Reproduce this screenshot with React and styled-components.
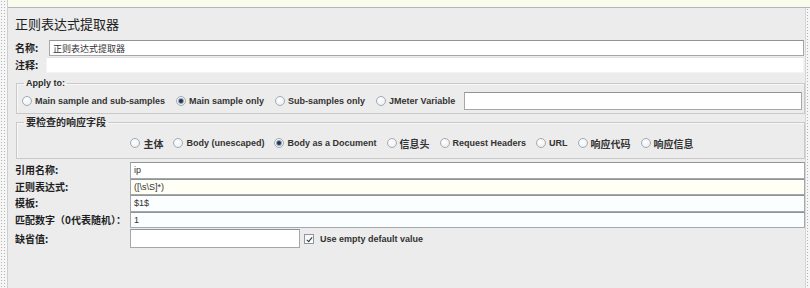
import React from "react";
import styled, { createGlobalStyle } from "styled-components";

const GlobalStyle = createGlobalStyle`
  html, body {
    margin     : 0       ;
    padding    : 0       ;
    background : #ececec ;
  }
  * { box-sizing : border-box ; }
`;

const CJK   = `"Noto Sans CJK SC", "Liberation Sans", sans-serif`;
const LATIN = `"Liberation Sans", "Noto Sans CJK SC", sans-serif`;

const Screen = styled.div`
  display    : flex    ;
  width      : 810px   ;
  height     : 288px   ;
  overflow   : hidden  ;
  background : #ececec ;
`;

const Splitter = styled.div`
  flex             : 0 0 ${(p) => p.$w}px ;
  background-color : #f6f6f6 ;
  background-image : radial-gradient(circle, #b3b3b3 0.7px, transparent 0.9px) ;
  background-size  : 3px 3px ;
  border-right     : ${(p) => (p.$left ? "1px solid #cfcfcf" : "none")} ;
  border-left      : ${(p) => (p.$left ? "none" : "1px solid #d6d6d6")} ;
`;

const Column = styled.div`
  flex           : 1      ;
  display        : flex   ;
  flex-direction : column ;
`;

const TopBand = styled.div`
  height        : 8px               ;
  background    : #fbfbeb           ;
  border-bottom : 1px solid #aeb6be ;
`;

const Main = styled.div`
  flex    : 1    ;
  display : flex ;
`;

const Panel = styled.div`
  flex           : 1      ;
  display        : flex   ;
  flex-direction : column ;
  padding        : 0 0 0 7px ;
  color          : #1e1e1e ;
`;

const Title = styled.div`
  margin-top  : 8px   ;
  height      : 16px  ;
  line-height : 16px  ;
  font-family : ${CJK} ;
  font-size   : 13px  ;
  color       : #202020 ;
`;

const FieldRow = styled.div`
  display      : flex   ;
  align-items  : center ;
  height       : 16px   ;
  margin-top   : ${(p) => p.$top}px ;
  margin-right : 1px    ;
`;

const FieldLabel = styled.div`
  flex        : 0 0 ${(p) => p.$w}px ;
  font-family : ${CJK} ;
  font-size   : 10px   ;
  font-weight : 700    ;
  line-height : 14px   ;
  white-space : nowrap ;
`;

const TextBox = styled.div`
  flex        : ${(p) => (p.$w ? `0 0 ${p.$w}px` : "1")} ;
  height      : 100% ;
  display     : flex   ;
  align-items : center ;
  padding     : 0 3px  ;
  background  : ${(p) => p.$bg || "#ffffff"} ;
  border      : 1px solid ${(p) => (p.$flat ? "#f4f4f4" : "#a4a8ac")} ;
  border-top-color : ${(p) => (p.$flat ? "#e2e2e2" : "#8f9499")} ;
  font-family : ${(p) => (p.$cjk ? CJK : LATIN)} ;
  font-size   : 9px    ;
  color       : #333   ;
  white-space : nowrap ;
`;

const Group = styled.fieldset`
  margin     : ${(p) => p.$top}px 0 0 1px ;
  padding    : ${(p) => p.$pad}px 2px ${(p) => p.$pad}px 5px ;
  border     : 1px solid #c9c9c9 ;
  box-shadow : inset 1px 1px 0 #f8f8f8 ;
  min-width  : 0 ;
`;

const Legend = styled.legend`
  margin-left : 2px  ;
  padding     : 0 2px ;
  line-height : 12px ;
  font-family : ${(p) => (p.$cjk ? CJK : LATIN)} ;
  font-size   : ${(p) => (p.$cjk ? 10 : 9)}px ;
  font-weight : 700  ;
  color       : #2a2a2a ;
`;

const RadioRow = styled.div`
  display         : flex   ;
  align-items     : center ;
  height          : ${(p) => p.$h}px ;
  justify-content : ${(p) => (p.$center ? "center" : "flex-start")} ;
`;

const RadioItem = styled.label`
  display      : flex   ;
  align-items  : center ;
  gap          : 3px    ;
  margin-right : ${(p) => p.$space || 11}px ;
  font-family  : ${(p) => (p.$cjk ? CJK : LATIN)} ;
  font-size    : ${(p) => (p.$cjk ? 10 : 9)}px ;
  font-weight  : 700    ;
  color        : #333   ;
  white-space  : nowrap ;

  &:last-child { margin-right : 0 ; }
`;

const RadioDot = styled.span`
  position      : relative ;
  flex          : 0 0 10px ;
  height        : 10px     ;
  border-radius : 50%      ;
  border        : 1px solid #a2abb4 ;
  background    : radial-gradient(circle at 40% 35%, #ffffff 0%, #e6eaee 100%) ;

  &::after {
    content       : "" ;
    position      : absolute ;
    left          : 2px ;
    top           : 2px ;
    width         : 4px ;
    height        : 4px ;
    border-radius : 50% ;
    background    : #2b3540 ;
    box-shadow    : 0 0 0 1px #8fa6c0 ;
    display       : ${(p) => (p.$on ? "block" : "none")} ;
  }
`;

const VarBox = styled(TextBox)`
  flex        : 1    ;
  height      : 18px ;
  margin-left : -2px ;
`;

const FormGrid = styled.div`
  display        : flex   ;
  flex-direction : column ;
  margin-top     : 3px    ;
`;

const FormRow = styled.div`
  display     : flex   ;
  align-items : center ;
  height      : ${(p) => p.$h}px ;
  margin-top  : ${(p) => p.$top || 0}px ;
`;

const CheckItem = styled.label`
  display     : flex   ;
  align-items : center ;
  gap         : 6px    ;
  margin-left : 4px    ;
  font-family : ${LATIN} ;
  font-size   : 9px    ;
  font-weight : 700    ;
  color       : #333   ;
`;

const CheckBox = styled.span`
  position   : relative ;
  width      : 10px ;
  height     : 10px ;
  border     : 1px solid #8e969e ;
  background : linear-gradient(135deg, #f2f4f6, #ffffff) ;

  &::after {
    content      : "" ;
    position     : absolute ;
    left         : 3px ;
    top          : 1px ;
    width        : 2px ;
    height       : 5px ;
    border-right : 1.5px solid #2a2f35 ;
    border-bottom: 1.5px solid #2a2f35 ;
    transform    : rotate(40deg) ;
  }
`;

const applyTo = [
  { text: "Main sample and sub-samples" },
  { text: "Main sample only", on: true },
  { text: "Sub-samples only" },
  { text: "JMeter Variable" },
];

const fields = [
  { text: "主体", cjk: true },
  { text: "Body (unescaped)" },
  { text: "Body as a Document", on: true },
  { text: "信息头", cjk: true },
  { text: "Request Headers" },
  { text: "URL" },
  { text: "响应代码", cjk: true },
  { text: "响应信息", cjk: true },
];

const rows = [
  { label: "引用名称:", value: "ip", bg: "#ffffff" },
  { label: "正则表达式:", value: "([\\s\\S]*)", bg: "#fffff6" },
  { label: "模板:", value: "$1$", bg: "#fbfefe" },
  { label: "匹配数字（0代表随机）：", value: "1", bg: "#fbfefe" },
];

export default function App() {
  return (
    <>
      <GlobalStyle />
      <Screen>
        <Splitter $w={8} $left />
        <Column>
          <TopBand />
          <Main>
            <Panel>
              <Title>正则表达式提取器</Title>

              <FieldRow $top={8}>
                <FieldLabel $w={34}>名称:</FieldLabel>
                <TextBox $cjk>正则表达式提取器</TextBox>
              </FieldRow>
              <FieldRow $top={1}>
                <FieldLabel $w={31}>注释:</FieldLabel>
                <TextBox $flat />
              </FieldRow>

              <Group $top={4} $pad={3}>
                <Legend>Apply to:</Legend>
                <RadioRow $h={18}>
                  {applyTo.map((r) => (
                    <RadioItem key={r.text}>
                      <RadioDot $on={r.on} />
                      {r.text}
                    </RadioItem>
                  ))}
                  <VarBox />
                </RadioRow>
              </Group>

              <Group $top={2} $pad={5}>
                <Legend $cjk>要检查的响应字段</Legend>
                <RadioRow $h={20} $center>
                  {fields.map((r) => (
                    <RadioItem key={r.text} $cjk={r.cjk} $space={10}>
                      <RadioDot $on={r.on} />
                      {r.text}
                    </RadioItem>
                  ))}
                </RadioRow>
              </Group>

              <FormGrid>
                {rows.map((r) => (
                  <FormRow key={r.label} $h={16.5}>
                    <FieldLabel $w={115}>{r.label}</FieldLabel>
                    <TextBox $bg={r.bg}>{r.value}</TextBox>
                  </FormRow>
                ))}
                <FormRow $h={19} $top={1}>
                  <FieldLabel $w={115}>缺省值:</FieldLabel>
                  <TextBox $w={170} />
                  <CheckItem>
                    <CheckBox />
                    Use empty default value
                  </CheckItem>
                </FormRow>
              </FormGrid>
            </Panel>
            <Splitter $w={5} />
          </Main>
        </Column>
      </Screen>
    </>
  );
}
